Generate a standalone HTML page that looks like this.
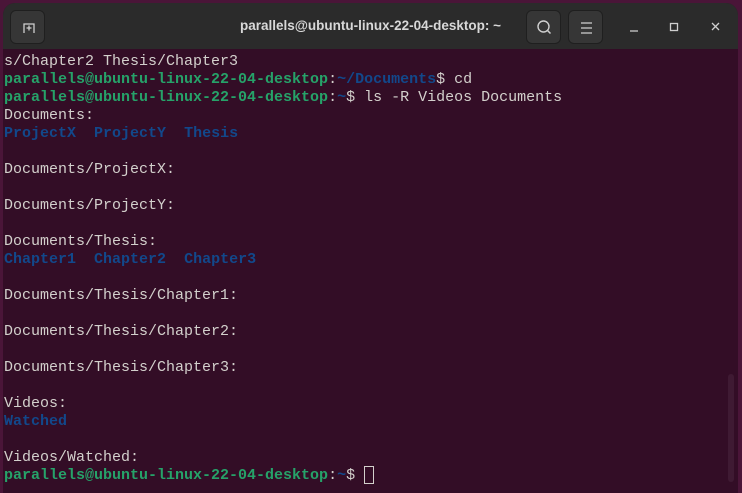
<!DOCTYPE html>
<html><head><meta charset="utf-8"><style>
*{margin:0;padding:0;box-sizing:border-box}
html,body{width:742px;height:485px;overflow:hidden;background:#4a1538}
.win{position:absolute;left:3px;top:3px;width:735px;height:490px;background:#330d26;border-radius:12px 12px 0 0;overflow:hidden}
.tb{position:absolute;left:0;top:0;width:735px;height:46px;background:#2b2b2b}
.btn{position:absolute;top:7px;width:35px;height:34px;border-radius:6px;background:#363636;border:1px solid #1f1f1f}
.title{position:absolute;left:0;width:735px;top:15px;text-align:center;color:#d8d8d8;font:bold 13.5px "Liberation Sans",sans-serif}
pre{position:absolute;left:1px;top:50px;font:15px/18px "Liberation Mono",monospace;color:#d3d0cc}
.g{color:#26a269;font-weight:bold}.b{color:#12488b;font-weight:bold}
.cur{display:inline-block;width:10px;height:18px;border:1.5px solid #d3d0cc;vertical-align:top;margin-top:-1px}
.sb{position:absolute;left:725px;top:371px;width:6px;height:108px;border-radius:3px;background:#3f1a33}
</style></head><body>
<div class="win">
<div class="tb">
<div class="btn" style="left:7px"><svg width="35" height="34" viewBox="0 0 35 34"><path d="M13 22V13h10v9M18 14.5v5M15.5 17h5" stroke="#cfcfcf" stroke-width="1.3" fill="none"/></svg></div>
<div class="title">parallels@ubuntu-linux-22-04-desktop: ~</div>
<div class="btn" style="left:523px"><svg width="35" height="34" viewBox="0 0 35 34"><circle cx="16.5" cy="15.5" r="5.5" stroke="#cfcfcf" stroke-width="1.4" fill="none"/><path d="M20.5 19.5l3 3" stroke="#cfcfcf" stroke-width="1.5"/></svg></div>
<div class="btn" style="left:565px"><svg width="35" height="34" viewBox="0 0 35 34"><path d="M12 12h11M12 17h11M12 22h11" stroke="#cfcfcf" stroke-width="1.2"/></svg></div>
<svg style="position:absolute;left:620px;top:0" width="115" height="46"><path d="M7 28h8" stroke="#cfcfcf" stroke-width="1.3"/><rect x="47.5" y="20.5" width="7" height="7" stroke="#cfcfcf" stroke-width="1.3" fill="none"/><path d="M89 20l7 7M96 20l-7 7" stroke="#cfcfcf" stroke-width="1.3"/></svg>
</div>
<pre>s/Chapter2 Thesis/Chapter3
<span class="g">parallels@ubuntu-linux-22-04-desktop</span>:<span class="b">~/Documents</span>$ cd
<span class="g">parallels@ubuntu-linux-22-04-desktop</span>:<span class="b">~</span>$ ls -R Videos Documents
Documents:
<span class="b">ProjectX</span>  <span class="b">ProjectY</span>  <span class="b">Thesis</span>

Documents/ProjectX:

Documents/ProjectY:

Documents/Thesis:
<span class="b">Chapter1</span>  <span class="b">Chapter2</span>  <span class="b">Chapter3</span>

Documents/Thesis/Chapter1:

Documents/Thesis/Chapter2:

Documents/Thesis/Chapter3:

Videos:
<span class="b">Watched</span>

Videos/Watched:
<span class="g">parallels@ubuntu-linux-22-04-desktop</span>:<span class="b">~</span>$ <span class="cur"></span></pre>
<div class="sb"></div>
</div>
</body></html>
